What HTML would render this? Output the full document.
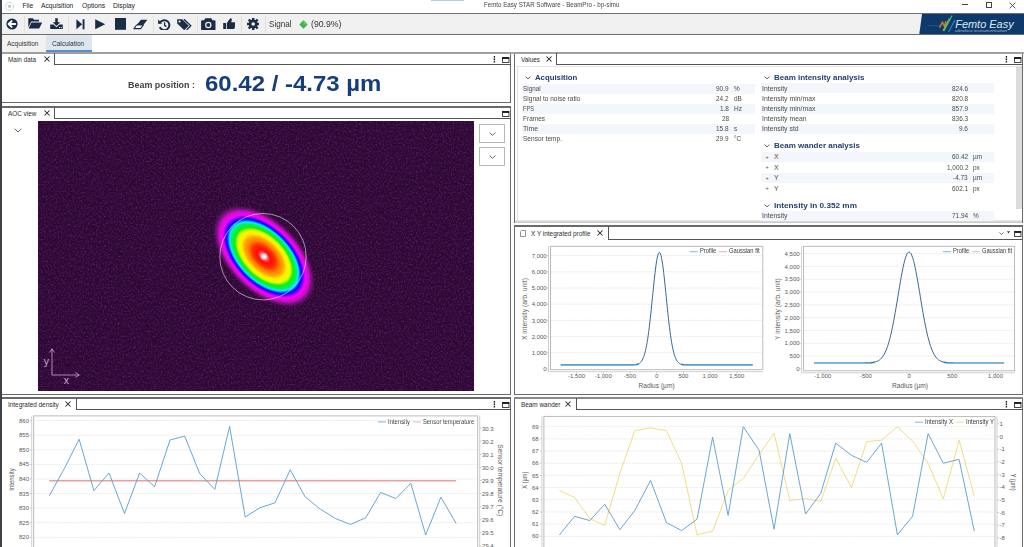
<!DOCTYPE html><html><head><meta charset="utf-8"><style>
*{margin:0;padding:0;box-sizing:border-box}
html,body{width:1024px;height:547px;overflow:hidden;background:#fff;font-family:"Liberation Sans", sans-serif;color:#333}
.a{position:absolute}
.t{position:absolute;white-space:nowrap;line-height:1}
</style></head><body>

<div class="a" style="left:0px;top:0px;width:1024px;height:13px;background:#fff"></div>
<div class="a" style="left:431px;top:0px;width:33px;height:1.2px;background:#b4cce4"></div>
<div class="a" style="left:0px;top:13px;width:1024px;height:1px;background:#6a7078"></div>
<svg class="a" style="left:4px;top:1px" width="11" height="11" viewBox="0 0 11 11"><circle cx="5.5" cy="5.5" r="4" fill="none" stroke="#999" stroke-width="0.9" stroke-dasharray="1 1.3"/><circle cx="5.5" cy="5.2" r="1.7" fill="#c8c8c8"/></svg>
<div class="t" style="left:22.5px;top:3.2px;font-size:6.7px;color:#222;font-weight:normal;">File</div>
<div class="t" style="left:41px;top:3.2px;font-size:6.7px;color:#222;font-weight:normal;">Acquisition</div>
<div class="t" style="left:82px;top:3.2px;font-size:6.7px;color:#222;font-weight:normal;">Options</div>
<div class="t" style="left:113px;top:3.2px;font-size:6.7px;color:#222;font-weight:normal;">Display</div>
<div class="t" style="left:484.00px;top:2.19px;font-size:6.9px;color:#444;font-weight:normal;transform:scaleX(0.8954);transform-origin:0 0;">Femto Easy STAR Software - BeamPro - bp-simu</div>
<div class="a" style="left:962px;top:4.4px;width:6px;height:1px;background:#444"></div>
<div class="a" style="left:986px;top:2.3px;width:6px;height:5.5px;border:1px solid #444"></div>
<svg class="a" style="left:1008.7px;top:2px" width="7" height="7" viewBox="0 0 7 7"><path d="M0.6 0.6L6.4 6.4M6.4 0.6L0.6 6.4" stroke="#444" stroke-width="0.9"/></svg>
<div class="a" style="left:0px;top:14px;width:1024px;height:20px;background:#f0f0f0"></div>
<div class="a" style="left:0px;top:34px;width:1024px;height:1px;background:#6e6e6e"></div>
<div class="a" style="left:23.5px;top:16px;width:1px;height:17px;background:#e0e0e0"></div>
<div class="a" style="left:67.5px;top:16px;width:1px;height:17px;background:#e0e0e0"></div>
<div class="a" style="left:152.5px;top:16px;width:1px;height:17px;background:#e0e0e0"></div>
<div class="a" style="left:197px;top:16px;width:1px;height:17px;background:#e0e0e0"></div>
<div class="a" style="left:240.5px;top:16px;width:1px;height:17px;background:#e0e0e0"></div>
<div class="a" style="left:264.5px;top:16px;width:1px;height:17px;background:#e0e0e0"></div>
<svg class="a" style="left:5.5px;top:17.8px" width="12" height="12" viewBox="0 0 12 12"><circle cx="6" cy="6" r="5.6" fill="#1b2c45"/><path d="M2.6 6L5.6 3.1M2.6 6L5.6 8.9M2.8 6H9.2" stroke="#fff" stroke-width="1.9" stroke-linecap="round" fill="none"/></svg>
<svg class="a" style="left:28px;top:18px" width="14.5" height="11" viewBox="0 0 14.5 11"><path d="M0.3 0.3H4.8L6 1.8H11V3.6H3.2L0.3 9.5Z" fill="#1b2c45"/><path d="M3.5 4.5H14.2L11.2 10.6H0.6Z" fill="#1b2c45"/></svg>
<svg class="a" style="left:49.5px;top:17.5px" width="13" height="11.5" viewBox="0 0 13 11.5"><path d="M5.2 0.2H7.8V4.2H10.3L6.5 8L2.7 4.2H5.2Z" fill="#1b2c45"/><path d="M0.2 6.6H3.6L6.5 9.3L9.4 6.6H12.8V11.3H0.2Z" fill="#1b2c45"/><circle cx="9.6" cy="9.6" r="0.6" fill="#fff"/><circle cx="11.2" cy="9.6" r="0.6" fill="#fff"/></svg>
<svg class="a" style="left:75.5px;top:19px" width="9" height="11" viewBox="0 0 9 11"><path d="M0.4 0.3L6.2 5.3L0.4 10.3Z" fill="#1b2c45"/><rect x="6.6" y="0.3" width="1.9" height="10" fill="#1b2c45"/></svg>
<svg class="a" style="left:94.5px;top:19px" width="11" height="11" viewBox="0 0 11 11"><path d="M0.2 0.3L10.2 5.3L0.2 10.3Z" fill="#1b2c45"/></svg>
<svg class="a" style="left:114.8px;top:18.1px" width="11.6" height="11.8" viewBox="0 0 11.6 11.8"><rect x="0" y="0" width="11.6" height="11.8" fill="#1b2c45"/></svg>
<svg class="a" style="left:133px;top:18.6px" width="15" height="11" viewBox="0 0 15 11"><path d="M8 0.7H14.3L10.35 6H3.64Z" fill="#1b2c45"/><path d="M3.64 6H10.35L7.6 9.6H0.9Z" fill="#fff" stroke="#1b2c45" stroke-width="1.1" stroke-linejoin="round"/></svg>
<svg class="a" style="left:158.2px;top:18.6px" width="12.4" height="11.5" viewBox="0 0 12.4 11.5"><path d="M2.3 3.2A5 5 0 1 1 1.8 8.2" stroke="#1b2c45" stroke-width="2" fill="none"/><path d="M0 0.6L0.2 5L4.4 4.4Z" fill="#1b2c45"/><path d="M6.6 3.3V6.3L8.4 7.6" stroke="#1b2c45" stroke-width="1.3" fill="none"/></svg>
<svg class="a" style="left:177.4px;top:18.6px" width="15" height="11.2" viewBox="0 0 15 11.2"><path d="M0.2 0.2H5.2L11.8 6.8L7.2 11.2L0.2 4.4Z" fill="#1b2c45"/><circle cx="2.6" cy="2.5" r="1.1" fill="#f0f0f0"/><path d="M7 0.2L13.8 6.8L9.6 11" stroke="#1b2c45" stroke-width="1.3" fill="none"/></svg>
<svg class="a" style="left:201.4px;top:17.5px" width="14.6" height="12.4" viewBox="0 0 14.6 12.4"><path d="M4.2 0.3H10.4L11.4 2.2H13.6Q14.5 2.2 14.5 3.2V11.2Q14.5 12.3 13.5 12.3H1.1Q0.1 12.3 0.1 11.2V3.2Q0.1 2.2 1.1 2.2H3.2Z" fill="#1b2c45"/><circle cx="7.3" cy="7" r="3.2" fill="#f0f0f0"/><circle cx="7.3" cy="7" r="2" fill="#1b2c45"/></svg>
<svg class="a" style="left:222.6px;top:18px" width="12.8" height="11.4" viewBox="0 0 12.8 11.4"><rect x="0.2" y="5" width="2.8" height="6.2" fill="#1b2c45"/><path d="M3.8 5L6.4 1.6Q7 0.2 8 0.3Q9.2 0.6 8.7 2.4L8.2 4.2H11.4Q12.6 4.3 12.5 5.6L11.6 10.2Q11.3 11.2 10.2 11.2H3.8Z" fill="#1b2c45"/></svg>
<svg class="a" style="left:247px;top:18px" width="12.4" height="12" viewBox="0 0 12.4 12"><rect x="5" y="-0.3" width="2.4" height="12.6" rx="0.4" fill="#1b2c45" transform="rotate(0 6.2 6)"/><rect x="5" y="-0.3" width="2.4" height="12.6" rx="0.4" fill="#1b2c45" transform="rotate(45 6.2 6)"/><rect x="5" y="-0.3" width="2.4" height="12.6" rx="0.4" fill="#1b2c45" transform="rotate(90 6.2 6)"/><rect x="5" y="-0.3" width="2.4" height="12.6" rx="0.4" fill="#1b2c45" transform="rotate(135 6.2 6)"/><circle cx="6.2" cy="6" r="4.4" fill="#1b2c45"/><circle cx="6.2" cy="6" r="1.8" fill="#f0f0f0"/></svg>
<div class="t" style="left:268.50px;top:19.52px;font-size:9.2px;color:#333;font-weight:normal;transform:scaleX(0.8798);transform-origin:0 0;">Signal</div>
<svg class="a" style="left:298.5px;top:20px" width="9" height="9" viewBox="0 0 9 9"><path d="M4.5 0.3L8.7 4.5L4.5 8.7L0.3 4.5Z" fill="#3fb24a"/><path d="M4.5 0.3L8.7 4.5L4.5 4.5Z" fill="#5fcd5f"/></svg>
<div class="t" style="left:311.00px;top:19.52px;font-size:9.2px;color:#333;font-weight:normal;transform:scaleX(0.9468);transform-origin:0 0;">(90.9%)</div>
<svg class="a" style="left:918px;top:14px" width="106" height="20" viewBox="0 0 106 20"><path d="M4 0H106V20H1.3Z" fill="#0d3a6b"/><path d="M10 11.8H21" stroke="#50607a" stroke-width="0.6"/><path d="M21.5 13.5L24.5 8.2L26.5 12.5L28 7" stroke="#d0802a" stroke-width="1.6" fill="none" opacity="0.9"/><path d="M25 17L31.5 4.5" stroke="#c8c830" stroke-width="1.3" opacity="0.85"/><path d="M26 17L34 1.5" stroke="#3cb878" stroke-width="1.4"/><path d="M30.5 18L37 6" stroke="#3a78d8" stroke-width="1.3"/><text x="37.2" y="14.4" font-family="Liberation Sans" font-style="italic" font-size="11.2" fill="#dfe9f4" textLength="58.5" lengthAdjust="spacingAndGlyphs">Femto Easy</text><text x="37" y="18.3" font-family="Liberation Sans" font-style="italic" font-size="3.4" fill="#9fb6d2" textLength="52" lengthAdjust="spacingAndGlyphs">ultrafast instrumentation</text></svg>
<div class="a" style="left:0px;top:35px;width:1024px;height:17px;background:#fff"></div>
<div class="a" style="left:2px;top:35px;width:45px;height:17px;background:#f2f2f2"></div>
<div class="a" style="left:46px;top:35px;width:46px;height:17px;background:#dde6ee"></div>
<div class="a" style="left:46px;top:50.3px;width:46px;height:1.6px;background:#5a8ec4"></div>
<div class="a" style="left:0px;top:52px;width:1024px;height:1.5px;background:#a8a8a8"></div>
<div class="t" style="left:7px;top:40.5px;font-size:6.5px;color:#333;font-weight:normal;">Acquisition</div>
<div class="t" style="left:52px;top:40.5px;font-size:6.5px;color:#333;font-weight:normal;">Calculation</div>
<div class="a" style="left:1px;top:52.5px;width:510px;height:50.5px;border:1px solid #6a6a6a;border-top:none;background:#fff"></div>
<div class="a" style="left:1px;top:52.0px;width:510px;height:1.5px;background:#a0a0a0"></div>
<div class="a" style="left:54px;top:52.5px;width:1px;height:11.5px;background:#555"></div>
<div class="a" style="left:54px;top:64.0px;width:457px;height:1px;background:#555"></div>
<div class="t" style="left:8px;top:56.65px;font-size:6.4px;color:#2c2c2c;font-weight:normal;">Main data</div>
<svg class="a" style="left:43.5px;top:56.4px" width="6" height="6" viewBox="0 0 6 6"><path d="M0.5 0.5L5.5 5.5M5.5 0.5L0.5 5.5" stroke="#222" stroke-width="1.05"/></svg>
<svg class="a" style="left:493.4px;top:56.0px" width="3" height="7" viewBox="0 0 3 7"><rect x="0.7" y="0" width="1.4" height="1.7" fill="#222"/><rect x="0.7" y="2.4" width="1.4" height="1.7" fill="#222"/><rect x="0.7" y="4.8" width="1.4" height="1.7" fill="#222"/></svg>
<svg class="a" style="left:501.5px;top:57.05px" width="8" height="6" viewBox="0 0 8 6"><rect x="0.5" y="0.5" width="6.5" height="5" fill="none" stroke="#333" stroke-width="0.9"/><rect x="0.5" y="0.3" width="6.5" height="1.6" fill="#111"/></svg>
<div class="a" style="left:1px;top:106.5px;width:510px;height:288px;border:1px solid #6a6a6a;border-top:none;background:#fff"></div>
<div class="a" style="left:1px;top:106.0px;width:510px;height:1.5px;background:#6a6a6a"></div>
<div class="a" style="left:54px;top:106.5px;width:1px;height:11.5px;background:#555"></div>
<div class="a" style="left:54px;top:118.0px;width:457px;height:1px;background:#555"></div>
<div class="t" style="left:8px;top:110.65px;font-size:6.4px;color:#2c2c2c;font-weight:normal;">AOC view</div>
<svg class="a" style="left:43.5px;top:110.4px" width="6" height="6" viewBox="0 0 6 6"><path d="M0.5 0.5L5.5 5.5M5.5 0.5L0.5 5.5" stroke="#222" stroke-width="1.05"/></svg>
<svg class="a" style="left:501.5px;top:111.05px" width="8" height="6" viewBox="0 0 8 6"><rect x="0.5" y="0.5" width="6.5" height="5" fill="none" stroke="#333" stroke-width="0.9"/><rect x="0.5" y="0.3" width="6.5" height="1.6" fill="#111"/></svg>
<div class="a" style="left:1px;top:397.5px;width:510px;height:150px;border:1px solid #6a6a6a;border-top:none;background:#fff"></div>
<div class="a" style="left:1px;top:397.0px;width:510px;height:1.5px;background:#6a6a6a"></div>
<div class="a" style="left:76px;top:397.5px;width:1px;height:11.5px;background:#555"></div>
<div class="a" style="left:76px;top:409.0px;width:435px;height:1px;background:#555"></div>
<div class="t" style="left:8px;top:401.65px;font-size:6.4px;color:#2c2c2c;font-weight:normal;">Integrated density</div>
<svg class="a" style="left:65px;top:401.4px" width="6" height="6" viewBox="0 0 6 6"><path d="M0.5 0.5L5.5 5.5M5.5 0.5L0.5 5.5" stroke="#222" stroke-width="1.05"/></svg>
<svg class="a" style="left:493.4px;top:401.0px" width="3" height="7" viewBox="0 0 3 7"><rect x="0.7" y="0" width="1.4" height="1.7" fill="#222"/><rect x="0.7" y="2.4" width="1.4" height="1.7" fill="#222"/><rect x="0.7" y="4.8" width="1.4" height="1.7" fill="#222"/></svg>
<svg class="a" style="left:501.5px;top:402.05px" width="8" height="6" viewBox="0 0 8 6"><rect x="0.5" y="0.5" width="6.5" height="5" fill="none" stroke="#333" stroke-width="0.9"/><rect x="0.5" y="0.3" width="6.5" height="1.6" fill="#111"/></svg>
<div class="a" style="left:514px;top:52.5px;width:509px;height:170px;border:1px solid #6a6a6a;border-top:none;background:#fff"></div>
<div class="a" style="left:514px;top:52.0px;width:509px;height:1.5px;background:#a0a0a0"></div>
<div class="a" style="left:556px;top:52.5px;width:1px;height:11.5px;background:#555"></div>
<div class="a" style="left:556px;top:64.0px;width:467px;height:1px;background:#555"></div>
<div class="t" style="left:521px;top:56.65px;font-size:6.4px;color:#2c2c2c;font-weight:normal;">Values</div>
<svg class="a" style="left:546px;top:56.4px" width="6" height="6" viewBox="0 0 6 6"><path d="M0.5 0.5L5.5 5.5M5.5 0.5L0.5 5.5" stroke="#222" stroke-width="1.05"/></svg>
<svg class="a" style="left:1005.4px;top:56.0px" width="3" height="7" viewBox="0 0 3 7"><rect x="0.7" y="0" width="1.4" height="1.7" fill="#222"/><rect x="0.7" y="2.4" width="1.4" height="1.7" fill="#222"/><rect x="0.7" y="4.8" width="1.4" height="1.7" fill="#222"/></svg>
<svg class="a" style="left:1013.5px;top:57.05px" width="8" height="6" viewBox="0 0 8 6"><rect x="0.5" y="0.5" width="6.5" height="5" fill="none" stroke="#333" stroke-width="0.9"/><rect x="0.5" y="0.3" width="6.5" height="1.6" fill="#111"/></svg>
<div class="a" style="left:514px;top:225.5px;width:509px;height:169px;border:1px solid #6a6a6a;border-top:none;background:#fff"></div>
<div class="a" style="left:514px;top:225.0px;width:509px;height:1.5px;background:#6a6a6a"></div>
<div class="a" style="left:608px;top:225.5px;width:1px;height:13.5px;background:#555"></div>
<div class="a" style="left:608px;top:239.0px;width:415px;height:1px;background:#555"></div>
<div class="t" style="left:531px;top:230.65px;font-size:6.4px;color:#2c2c2c;font-weight:normal;">X Y integrated profile</div>
<svg class="a" style="left:597px;top:230.4px" width="6" height="6" viewBox="0 0 6 6"><path d="M0.5 0.5L5.5 5.5M5.5 0.5L0.5 5.5" stroke="#222" stroke-width="1.05"/></svg>
<svg class="a" style="left:1013.5px;top:231.05px" width="8" height="6" viewBox="0 0 8 6"><rect x="0.5" y="0.5" width="6.5" height="5" fill="none" stroke="#333" stroke-width="0.9"/><rect x="0.5" y="0.3" width="6.5" height="1.6" fill="#111"/></svg>
<svg class="a" style="left:520px;top:230px" width="6" height="7" viewBox="0 0 6 7"><path d="M0.5 1.5L1.5 0.5H5.5V6.5H0.5Z" fill="none" stroke="#777" stroke-width="0.8"/></svg>
<svg class="a" style="left:998.5px;top:231.8px" width="5" height="3" viewBox="0 0 5 3"><path d="M0.4 0.4L2.5 2.5L4.6 0.4" stroke="#555" stroke-width="0.8" fill="none"/></svg>
<svg class="a" style="left:1007.2px;top:230.8px" width="3" height="3" viewBox="0 0 3 3"><path d="M0 0.2H3L1.5 2.4Z" fill="#333"/></svg>
<div class="a" style="left:514px;top:397.5px;width:509px;height:150px;border:1px solid #6a6a6a;border-top:none;background:#fff"></div>
<div class="a" style="left:514px;top:397.0px;width:509px;height:1.5px;background:#8a8a8a"></div>
<div class="a" style="left:576px;top:397.5px;width:1px;height:11.5px;background:#555"></div>
<div class="a" style="left:576px;top:409.0px;width:447px;height:1px;background:#555"></div>
<div class="t" style="left:521px;top:401.65px;font-size:6.4px;color:#2c2c2c;font-weight:normal;">Beam wander</div>
<svg class="a" style="left:565px;top:401.4px" width="6" height="6" viewBox="0 0 6 6"><path d="M0.5 0.5L5.5 5.5M5.5 0.5L0.5 5.5" stroke="#222" stroke-width="1.05"/></svg>
<svg class="a" style="left:1005.4px;top:401.0px" width="3" height="7" viewBox="0 0 3 7"><rect x="0.7" y="0" width="1.4" height="1.7" fill="#222"/><rect x="0.7" y="2.4" width="1.4" height="1.7" fill="#222"/><rect x="0.7" y="4.8" width="1.4" height="1.7" fill="#222"/></svg>
<svg class="a" style="left:1013.5px;top:402.05px" width="8" height="6" viewBox="0 0 8 6"><rect x="0.5" y="0.5" width="6.5" height="5" fill="none" stroke="#333" stroke-width="0.9"/><rect x="0.5" y="0.3" width="6.5" height="1.6" fill="#111"/></svg>
<div class="t" style="left:127.70px;top:79.85px;font-size:9.8px;color:#444;font-weight:bold;transform:scaleX(0.9115);transform-origin:0 0;">Beam position :</div>
<div class="t" style="left:204.80px;top:73.36px;font-size:21.6px;color:#163d7c;font-weight:bold;transform:scaleX(1.1104);transform-origin:0 0;">60.42 / -4.73 µm</div>
<svg class="a" style="left:14px;top:128px" width="8" height="5" viewBox="0 0 8 5"><path d="M0.7 0.7L4 4L7.3 0.7" stroke="#555" stroke-width="0.9" fill="none"/></svg>
<div class="a" style="left:479px;top:123.5px;width:26px;height:19px;border:1px solid #b8b8b8;background:#fff"></div>
<svg class="a" style="left:489px;top:131.5px" width="7" height="4" viewBox="0 0 7 4"><path d="M0.6 0.6L3.5 3.3L6.4 0.6" stroke="#555" stroke-width="0.9" fill="none"/></svg>
<div class="a" style="left:479px;top:146.5px;width:26px;height:19px;border:1px solid #b8b8b8;background:#fff"></div>
<svg class="a" style="left:489px;top:154.5px" width="7" height="4" viewBox="0 0 7 4"><path d="M0.6 0.6L3.5 3.3L6.4 0.6" stroke="#555" stroke-width="0.9" fill="none"/></svg>
<svg class="a" style="left:38px;top:121px" width="436" height="270" viewBox="0 0 436 270">
<defs>
<filter id="nz" x="0" y="0" width="100%" height="100%"><feTurbulence type="fractalNoise" baseFrequency="0.6" numOctaves="3" seed="11" result="n"/>
<feColorMatrix in="n" type="matrix" values="0 0 0 0 0.30  0 0 0 0 0.05  0 0 0 0 0.34  0 0 0 -1.8 1.0"/></filter>
<radialGradient id="bm" cx="0.5" cy="0.5" r="0.5"><stop offset="0" stop-color="#ffd0d0" stop-opacity="1"/><stop offset="0.05" stop-color="#ff8080" stop-opacity="1"/><stop offset="0.10" stop-color="#ff3030" stop-opacity="1"/><stop offset="0.13" stop-color="#ff0a0a" stop-opacity="1"/><stop offset="0.22" stop-color="#ff3000" stop-opacity="1"/><stop offset="0.3" stop-color="#ff8000" stop-opacity="1"/><stop offset="0.37" stop-color="#ffa800" stop-opacity="1"/><stop offset="0.43" stop-color="#ffee00" stop-opacity="1"/><stop offset="0.5" stop-color="#e8ff00" stop-opacity="1"/><stop offset="0.555" stop-color="#10f010" stop-opacity="1"/><stop offset="0.62" stop-color="#00f060" stop-opacity="1"/><stop offset="0.655" stop-color="#00f0ff" stop-opacity="1"/><stop offset="0.685" stop-color="#0070ff" stop-opacity="1"/><stop offset="0.71" stop-color="#0808ff" stop-opacity="1"/><stop offset="0.745" stop-color="#6000ff" stop-opacity="1"/><stop offset="0.79" stop-color="#ff00ff" stop-opacity="1"/><stop offset="0.86" stop-color="#e010e0" stop-opacity="0.85"/><stop offset="0.93" stop-color="#901890" stop-opacity="0.45"/><stop offset="1.0" stop-color="#340a3e" stop-opacity="0"/></radialGradient>
</defs>
<rect width="436" height="270" fill="#2d0835"/>
<rect width="436" height="270" filter="url(#nz)" opacity="0.5"/>
<ellipse cx="226" cy="135.4" rx="64" ry="37" fill="url(#bm)" transform="rotate(45 226 135.4)"/>
<circle cx="226" cy="135.5" r="2.2" fill="#fff" opacity="0.95"/><circle cx="226" cy="135.5" r="3.6" fill="#fff" opacity="0.35"/><circle cx="225" cy="135.7" r="43.2" fill="none" stroke="#f4e8f4" stroke-opacity="0.75" stroke-width="0.8"/>
<path d="M14 254V228M11.5 231.5L14 227.8L16.5 231.5M14 254H41M37.5 251.5L41.2 254L37.5 256.5" stroke="#c9a6d6" stroke-width="0.8" fill="none"/>
<text x="5.8" y="244.2" font-family="Liberation Sans" font-size="10.5" fill="#c9a6d6">y</text>
<text x="25.8" y="262.9" font-family="Liberation Sans" font-size="10.5" fill="#c9a6d6">x</text>
</svg>
<div class="a" style="left:516px;top:66px;width:500px;height:1px;background:#e6e6e6"></div>
<div class="a" style="left:516.5px;top:66px;width:1px;height:156px;background:#e2e2e2"></div>
<div class="a" style="left:1016px;top:66px;width:6px;height:143px;background:#dcdcdc"></div>
<div class="a" style="left:515px;top:219.6px;width:507px;height:3px;background:linear-gradient(#ececec,#c4c4c4)"></div>
<svg class="a" style="left:524.7px;top:76.1px" width="6" height="4" viewBox="0 0 6 4"><path d="M0.6 0.6L3 3L5.4 0.6" stroke="#555" stroke-width="0.9" fill="none"/></svg>
<div class="t" style="left:535.00px;top:74.31px;font-size:7.6px;color:#213f6c;font-weight:bold;transform:scaleX(1.0247);transform-origin:0 0;">Acquisition</div>
<div class="a" style="left:521.5px;top:83.8px;width:233.5px;height:10px;background:#f3f6fa"></div>
<div class="t" style="left:523.00px;top:85.38px;font-size:7px;color:#4a4a4a;font-weight:normal;transform:scaleX(0.9045);transform-origin:0 0;">Signal</div>
<div class="t" style="left:716.47px;top:85.38px;font-size:7px;color:#4a4a4a;font-weight:normal;transform:scaleX(0.9200);transform-origin:0 0;">90.9</div>
<div class="t" style="left:734.00px;top:85.38px;font-size:7px;color:#4a4a4a;font-weight:normal;transform:scaleX(0.9200);transform-origin:0 0;">%</div>
<div class="t" style="left:523.00px;top:95.33px;font-size:7px;color:#4a4a4a;font-weight:normal;transform:scaleX(0.9320);transform-origin:0 0;">Signal to noise ratio</div>
<div class="t" style="left:716.47px;top:95.33px;font-size:7px;color:#4a4a4a;font-weight:normal;transform:scaleX(0.9200);transform-origin:0 0;">24.2</div>
<div class="t" style="left:734.00px;top:95.33px;font-size:7px;color:#4a4a4a;font-weight:normal;transform:scaleX(0.9200);transform-origin:0 0;">dB</div>
<div class="a" style="left:521.5px;top:103.69999999999999px;width:233.5px;height:10px;background:#f3f6fa"></div>
<div class="t" style="left:523.00px;top:105.28px;font-size:7px;color:#4a4a4a;font-weight:normal;transform:scaleX(0.8080);transform-origin:0 0;">FPS</div>
<div class="t" style="left:720.05px;top:105.28px;font-size:7px;color:#4a4a4a;font-weight:normal;transform:scaleX(0.9200);transform-origin:0 0;">1.8</div>
<div class="t" style="left:734.00px;top:105.28px;font-size:7px;color:#4a4a4a;font-weight:normal;transform:scaleX(0.9200);transform-origin:0 0;">Hz</div>
<div class="t" style="left:523.00px;top:115.23px;font-size:7px;color:#4a4a4a;font-weight:normal;transform:scaleX(0.9273);transform-origin:0 0;">Frames</div>
<div class="t" style="left:721.84px;top:115.23px;font-size:7px;color:#4a4a4a;font-weight:normal;transform:scaleX(0.9200);transform-origin:0 0;">28</div>
<div class="a" style="left:521.5px;top:123.6px;width:233.5px;height:10px;background:#f3f6fa"></div>
<div class="t" style="left:523.00px;top:125.18px;font-size:7px;color:#4a4a4a;font-weight:normal;transform:scaleX(0.9806);transform-origin:0 0;">Time</div>
<div class="t" style="left:716.47px;top:125.18px;font-size:7px;color:#4a4a4a;font-weight:normal;transform:scaleX(0.9200);transform-origin:0 0;">15.8</div>
<div class="t" style="left:734.00px;top:125.18px;font-size:7px;color:#4a4a4a;font-weight:normal;transform:scaleX(0.9200);transform-origin:0 0;">s</div>
<div class="t" style="left:523.00px;top:135.13px;font-size:7px;color:#4a4a4a;font-weight:normal;transform:scaleX(0.9368);transform-origin:0 0;">Sensor temp.</div>
<div class="t" style="left:716.47px;top:135.13px;font-size:7px;color:#4a4a4a;font-weight:normal;transform:scaleX(0.9200);transform-origin:0 0;">29.9</div>
<div class="t" style="left:734.00px;top:135.13px;font-size:7px;color:#4a4a4a;font-weight:normal;transform:scaleX(0.9200);transform-origin:0 0;">°C</div>
<svg class="a" style="left:763.7px;top:76.1px" width="6" height="4" viewBox="0 0 6 4"><path d="M0.6 0.6L3 3L5.4 0.6" stroke="#555" stroke-width="0.9" fill="none"/></svg>
<div class="t" style="left:774.00px;top:74.31px;font-size:7.6px;color:#213f6c;font-weight:bold;transform:scaleX(1.0502);transform-origin:0 0;">Beam intensity analysis</div>
<div class="a" style="left:760.5px;top:83.3px;width:233.0px;height:10px;background:#f3f6fa"></div>
<div class="t" style="left:762.00px;top:84.88px;font-size:7px;color:#4a4a4a;font-weight:normal;transform:scaleX(0.9800);transform-origin:0 0;">Intensity</div>
<div class="t" style="left:951.88px;top:84.88px;font-size:7px;color:#4a4a4a;font-weight:normal;transform:scaleX(0.9200);transform-origin:0 0;">824.6</div>
<div class="t" style="left:762.00px;top:94.98px;font-size:7px;color:#4a4a4a;font-weight:normal;transform:scaleX(0.9800);transform-origin:0 0;">Intensity min/max</div>
<div class="t" style="left:951.88px;top:94.98px;font-size:7px;color:#4a4a4a;font-weight:normal;transform:scaleX(0.9200);transform-origin:0 0;">820.8</div>
<div class="a" style="left:760.5px;top:103.5px;width:233.0px;height:10px;background:#f3f6fa"></div>
<div class="t" style="left:762.00px;top:105.08px;font-size:7px;color:#4a4a4a;font-weight:normal;transform:scaleX(0.9800);transform-origin:0 0;">Intensity min/max</div>
<div class="t" style="left:951.88px;top:105.08px;font-size:7px;color:#4a4a4a;font-weight:normal;transform:scaleX(0.9200);transform-origin:0 0;">857.9</div>
<div class="t" style="left:762.00px;top:115.18px;font-size:7px;color:#4a4a4a;font-weight:normal;transform:scaleX(0.9800);transform-origin:0 0;">Intensity mean</div>
<div class="t" style="left:951.88px;top:115.18px;font-size:7px;color:#4a4a4a;font-weight:normal;transform:scaleX(0.9200);transform-origin:0 0;">836.3</div>
<div class="a" style="left:760.5px;top:123.69999999999999px;width:233.0px;height:10px;background:#f3f6fa"></div>
<div class="t" style="left:762.00px;top:125.28px;font-size:7px;color:#4a4a4a;font-weight:normal;transform:scaleX(0.9800);transform-origin:0 0;">Intensity std</div>
<div class="t" style="left:959.05px;top:125.28px;font-size:7px;color:#4a4a4a;font-weight:normal;transform:scaleX(0.9200);transform-origin:0 0;">9.6</div>
<svg class="a" style="left:763.7px;top:143.60000000000002px" width="6" height="4" viewBox="0 0 6 4"><path d="M0.6 0.6L3 3L5.4 0.6" stroke="#555" stroke-width="0.9" fill="none"/></svg>
<div class="t" style="left:774.00px;top:141.81px;font-size:7.6px;color:#213f6c;font-weight:bold;transform:scaleX(1.0549);transform-origin:0 0;">Beam wander analysis</div>
<div class="a" style="left:760.5px;top:151.6px;width:233.0px;height:10px;background:#f3f6fa"></div>
<div class="t" style="left:765.50px;top:154.75px;font-size:5.5px;color:#555;font-weight:normal;">+</div>
<div class="t" style="left:774.00px;top:153.18px;font-size:7px;color:#4a4a4a;font-weight:normal;">X</div>
<div class="t" style="left:951.88px;top:153.18px;font-size:7px;color:#4a4a4a;font-weight:normal;transform:scaleX(0.9200);transform-origin:0 0;">60.42</div>
<div class="t" style="left:973.00px;top:153.18px;font-size:7px;color:#4a4a4a;font-weight:normal;transform:scaleX(0.9200);transform-origin:0 0;">µm</div>
<div class="t" style="left:765.50px;top:165.25px;font-size:5.5px;color:#555;font-weight:normal;">+</div>
<div class="t" style="left:774.00px;top:163.68px;font-size:7px;color:#4a4a4a;font-weight:normal;">X</div>
<div class="t" style="left:946.51px;top:163.68px;font-size:7px;color:#4a4a4a;font-weight:normal;transform:scaleX(0.9200);transform-origin:0 0;">1,000.2</div>
<div class="t" style="left:973.00px;top:163.68px;font-size:7px;color:#4a4a4a;font-weight:normal;transform:scaleX(0.9200);transform-origin:0 0;">px</div>
<div class="a" style="left:760.5px;top:172.6px;width:233.0px;height:10px;background:#f3f6fa"></div>
<div class="t" style="left:765.50px;top:175.75px;font-size:5.5px;color:#555;font-weight:normal;">+</div>
<div class="t" style="left:774.00px;top:174.18px;font-size:7px;color:#4a4a4a;font-weight:normal;">Y</div>
<div class="t" style="left:953.32px;top:174.18px;font-size:7px;color:#4a4a4a;font-weight:normal;transform:scaleX(0.9200);transform-origin:0 0;">-4.73</div>
<div class="t" style="left:973.00px;top:174.18px;font-size:7px;color:#4a4a4a;font-weight:normal;transform:scaleX(0.9200);transform-origin:0 0;">µm</div>
<div class="t" style="left:765.50px;top:186.25px;font-size:5.5px;color:#555;font-weight:normal;">+</div>
<div class="t" style="left:774.00px;top:184.68px;font-size:7px;color:#4a4a4a;font-weight:normal;">Y</div>
<div class="t" style="left:951.88px;top:184.68px;font-size:7px;color:#4a4a4a;font-weight:normal;transform:scaleX(0.9200);transform-origin:0 0;">602.1</div>
<div class="t" style="left:973.00px;top:184.68px;font-size:7px;color:#4a4a4a;font-weight:normal;transform:scaleX(0.9200);transform-origin:0 0;">px</div>
<svg class="a" style="left:763.7px;top:203.60000000000002px" width="6" height="4" viewBox="0 0 6 4"><path d="M0.6 0.6L3 3L5.4 0.6" stroke="#555" stroke-width="0.9" fill="none"/></svg>
<div class="t" style="left:774.00px;top:201.81px;font-size:7.6px;color:#213f6c;font-weight:bold;transform:scaleX(1.0797);transform-origin:0 0;">Intensity in 0.352 mm</div>
<div class="a" style="left:760.5px;top:210.6px;width:233.0px;height:10px;background:#f3f6fa"></div>
<div class="t" style="left:762.00px;top:212.18px;font-size:7px;color:#4a4a4a;font-weight:normal;transform:scaleX(0.9800);transform-origin:0 0;">Intensity</div>
<div class="t" style="left:951.88px;top:212.18px;font-size:7px;color:#4a4a4a;font-weight:normal;transform:scaleX(0.9200);transform-origin:0 0;">71.94</div>
<div class="t" style="left:973.00px;top:212.18px;font-size:7px;color:#4a4a4a;font-weight:normal;transform:scaleX(0.9200);transform-origin:0 0;">%</div>
<div class="t" style="left:728.80px;top:248.42px;font-size:6.6px;color:#3a3a3a;font-weight:normal;transform:scaleX(0.8810);transform-origin:0 0;">Gaussian fit</div>
<div class="t" style="left:699.60px;top:248.42px;font-size:6.6px;color:#3a3a3a;font-weight:normal;transform:scaleX(0.8660);transform-origin:0 0;">Profile</div>
<svg class="a" style="left:515px;top:240px" width="255" height="150" viewBox="515 240 255 150"><path d="M550.5 352.80H762.8" stroke="#e2e2e2" stroke-width="0.8" stroke-dasharray="1.5 1"/><path d="M550.5 336.60H762.8" stroke="#e2e2e2" stroke-width="0.8" stroke-dasharray="1.5 1"/><path d="M550.5 320.40H762.8" stroke="#e2e2e2" stroke-width="0.8" stroke-dasharray="1.5 1"/><path d="M550.5 304.20H762.8" stroke="#e2e2e2" stroke-width="0.8" stroke-dasharray="1.5 1"/><path d="M550.5 288.00H762.8" stroke="#e2e2e2" stroke-width="0.8" stroke-dasharray="1.5 1"/><path d="M550.5 271.80H762.8" stroke="#e2e2e2" stroke-width="0.8" stroke-dasharray="1.5 1"/><path d="M550.5 255.60H762.8" stroke="#e2e2e2" stroke-width="0.8" stroke-dasharray="1.5 1"/><rect x="550.5" y="246.3" width="212.29999999999995" height="123.39999999999998" fill="none" stroke="#b4b4b4" stroke-width="0.9"/><path d="M548.5 246.3V371.7" stroke="#c4c4c4" stroke-width="0.8"/><path d="M546.5 369.00H548.5" stroke="#c4c4c4" stroke-width="0.8"/><path d="M546.5 352.80H548.5" stroke="#c4c4c4" stroke-width="0.8"/><path d="M546.5 336.60H548.5" stroke="#c4c4c4" stroke-width="0.8"/><path d="M546.5 320.40H548.5" stroke="#c4c4c4" stroke-width="0.8"/><path d="M546.5 304.20H548.5" stroke="#c4c4c4" stroke-width="0.8"/><path d="M546.5 288.00H548.5" stroke="#c4c4c4" stroke-width="0.8"/><path d="M546.5 271.80H548.5" stroke="#c4c4c4" stroke-width="0.8"/><path d="M546.5 255.60H548.5" stroke="#c4c4c4" stroke-width="0.8"/><path d="M548.5 371.7H762.8" stroke="#c4c4c4" stroke-width="0.8"/><path d="M576.60 371.7V373.7" stroke="#c4c4c4" stroke-width="0.8"/><path d="M603.30 371.7V373.7" stroke="#c4c4c4" stroke-width="0.8"/><path d="M630.00 371.7V373.7" stroke="#c4c4c4" stroke-width="0.8"/><path d="M656.70 371.7V373.7" stroke="#c4c4c4" stroke-width="0.8"/><path d="M683.40 371.7V373.7" stroke="#c4c4c4" stroke-width="0.8"/><path d="M710.10 371.7V373.7" stroke="#c4c4c4" stroke-width="0.8"/><path d="M736.80 371.7V373.7" stroke="#c4c4c4" stroke-width="0.8"/><path d="M560.58 364.95 L561.11 364.95 L561.65 364.95 L562.18 364.95 L562.72 364.95 L563.25 364.95 L563.78 364.95 L564.32 364.95 L564.85 364.95 L565.39 364.95 L565.92 364.95 L566.45 364.95 L566.99 364.95 L567.52 364.95 L568.06 364.95 L568.59 364.95 L569.12 364.95 L569.66 364.95 L570.19 364.95 L570.73 364.95 L571.26 364.95 L571.79 364.95 L572.33 364.95 L572.86 364.95 L573.40 364.95 L573.93 364.95 L574.46 364.95 L575.00 364.95 L575.53 364.95 L576.07 364.95 L576.60 364.95 L577.13 364.95 L577.67 364.95 L578.20 364.95 L578.74 364.95 L579.27 364.95 L579.80 364.95 L580.34 364.95 L580.87 364.95 L581.41 364.95 L581.94 364.95 L582.47 364.95 L583.01 364.95 L583.54 364.95 L584.08 364.95 L584.61 364.95 L585.14 364.95 L585.68 364.95 L586.21 364.95 L586.75 364.95 L587.28 364.95 L587.81 364.95 L588.35 364.95 L588.88 364.95 L589.42 364.95 L589.95 364.95 L590.48 364.95 L591.02 364.95 L591.55 364.95 L592.09 364.95 L592.62 364.95 L593.15 364.95 L593.69 364.95 L594.22 364.95 L594.76 364.95 L595.29 364.95 L595.82 364.95 L596.36 364.95 L596.89 364.95 L597.43 364.95 L597.96 364.95 L598.49 364.95 L599.03 364.95 L599.56 364.95 L600.10 364.95 L600.63 364.95 L601.16 364.95 L601.70 364.95 L602.23 364.95 L602.77 364.95 L603.30 364.95 L603.83 364.95 L604.37 364.95 L604.90 364.95 L605.44 364.95 L605.97 364.95 L606.50 364.95 L607.04 364.95 L607.57 364.95 L608.11 364.95 L608.64 364.95 L609.17 364.95 L609.71 364.95 L610.24 364.95 L610.78 364.95 L611.31 364.95 L611.84 364.95 L612.38 364.95 L612.91 364.95 L613.45 364.95 L613.98 364.95 L614.51 364.95 L615.05 364.95 L615.58 364.95 L616.12 364.95 L616.65 364.95 L617.18 364.95 L617.72 364.95 L618.25 364.95 L618.79 364.95 L619.32 364.95 L619.85 364.95 L620.39 364.95 L620.92 364.95 L621.46 364.95 L621.99 364.95 L622.52 364.95 L623.06 364.95 L623.59 364.95 L624.13 364.95 L624.66 364.95 L625.19 364.95 L625.73 364.95 L626.26 364.95 L626.80 364.95 L627.33 364.95 L627.86 364.95 L628.40 364.95 L628.93 364.94 L629.47 364.94 L630.00 364.94 L630.53 364.93 L631.07 364.93 L631.60 364.92 L632.14 364.91 L632.67 364.90 L633.20 364.88 L633.74 364.85 L634.27 364.82 L634.81 364.77 L635.34 364.72 L635.87 364.64 L636.41 364.55 L636.94 364.43 L637.48 364.28 L638.01 364.10 L638.54 363.86" stroke="#5b9dc8" stroke-width="1.7" fill="none" stroke-linejoin="round" /><path d="M681.26 364.28 L681.80 364.43 L682.33 364.55 L682.87 364.64 L683.40 364.72 L683.93 364.77 L684.47 364.82 L685.00 364.85 L685.54 364.88 L686.07 364.90 L686.60 364.91 L687.14 364.92 L687.67 364.93 L688.21 364.93 L688.74 364.94 L689.27 364.94 L689.81 364.94 L690.34 364.95 L690.88 364.95 L691.41 364.95 L691.94 364.95 L692.48 364.95 L693.01 364.95 L693.55 364.95 L694.08 364.95 L694.61 364.95 L695.15 364.95 L695.68 364.95 L696.22 364.95 L696.75 364.95 L697.28 364.95 L697.82 364.95 L698.35 364.95 L698.89 364.95 L699.42 364.95 L699.95 364.95 L700.49 364.95 L701.02 364.95 L701.56 364.95 L702.09 364.95 L702.62 364.95 L703.16 364.95 L703.69 364.95 L704.23 364.95 L704.76 364.95 L705.29 364.95 L705.83 364.95 L706.36 364.95 L706.90 364.95 L707.43 364.95 L707.96 364.95 L708.50 364.95 L709.03 364.95 L709.57 364.95 L710.10 364.95 L710.63 364.95 L711.17 364.95 L711.70 364.95 L712.24 364.95 L712.77 364.95 L713.30 364.95 L713.84 364.95 L714.37 364.95 L714.91 364.95 L715.44 364.95 L715.97 364.95 L716.51 364.95 L717.04 364.95 L717.58 364.95 L718.11 364.95 L718.64 364.95 L719.18 364.95 L719.71 364.95 L720.25 364.95 L720.78 364.95 L721.31 364.95 L721.85 364.95 L722.38 364.95 L722.92 364.95 L723.45 364.95 L723.98 364.95 L724.52 364.95 L725.05 364.95 L725.59 364.95 L726.12 364.95 L726.65 364.95 L727.19 364.95 L727.72 364.95 L728.26 364.95 L728.79 364.95 L729.32 364.95 L729.86 364.95 L730.39 364.95 L730.93 364.95 L731.46 364.95 L731.99 364.95 L732.53 364.95 L733.06 364.95 L733.60 364.95 L734.13 364.95 L734.66 364.95 L735.20 364.95 L735.73 364.95 L736.27 364.95 L736.80 364.95 L737.33 364.95 L737.87 364.95 L738.40 364.95 L738.94 364.95 L739.47 364.95 L740.00 364.95 L740.54 364.95 L741.07 364.95 L741.61 364.95 L742.14 364.95 L742.67 364.95 L743.21 364.95 L743.74 364.95 L744.28 364.95 L744.81 364.95 L745.34 364.95 L745.88 364.95 L746.41 364.95 L746.95 364.95 L747.48 364.95 L748.01 364.95 L748.55 364.95 L749.08 364.95 L749.62 364.95 L750.15 364.95 L750.68 364.95 L751.22 364.95 L751.75 364.95 L752.29 364.95 L752.82 364.95" stroke="#5b9dc8" stroke-width="1.7" fill="none" stroke-linejoin="round" /><path d="M636.41 364.55 L636.94 364.43 L637.48 364.28 L638.01 364.10 L638.54 363.86 L639.08 363.58 L639.61 363.22 L640.15 362.79 L640.68 362.27 L641.21 361.64 L641.75 360.89 L642.28 360.00 L642.82 358.95 L643.35 357.73 L643.88 356.30 L644.42 354.66 L644.95 352.78 L645.49 350.64 L646.02 348.23 L646.55 345.54 L647.09 342.54 L647.62 339.24 L648.16 335.64 L648.69 331.73 L649.22 327.54 L649.76 323.06 L650.29 318.34 L650.83 313.40 L651.36 308.29 L651.89 303.04 L652.43 297.73 L652.96 292.40 L653.50 287.12 L654.03 281.97 L654.56 277.02 L655.10 272.34 L655.63 268.00 L656.17 264.07 L656.70 260.63 L657.23 257.73 L657.77 255.41 L658.30 253.73 L658.84 252.70 L659.37 252.36 L659.90 252.70 L660.44 253.73 L660.97 255.41 L661.51 257.73 L662.04 260.63 L662.57 264.07 L663.11 268.00 L663.64 272.34 L664.18 277.02 L664.71 281.97 L665.24 287.12 L665.78 292.40 L666.31 297.73 L666.85 303.04 L667.38 308.29 L667.91 313.40 L668.45 318.34 L668.98 323.06 L669.52 327.54 L670.05 331.73 L670.58 335.64 L671.12 339.24 L671.65 342.54 L672.19 345.54 L672.72 348.23 L673.25 350.64 L673.79 352.78 L674.32 354.66 L674.86 356.30 L675.39 357.73 L675.92 358.95 L676.46 360.00 L676.99 360.89 L677.53 361.64 L678.06 362.27 L678.59 362.79 L679.13 363.22 L679.66 363.58 L680.20 363.86 L680.73 364.10 L681.26 364.28 L681.80 364.43 L682.33 364.55 L682.87 364.64 L683.40 364.72" stroke="#3a6890" stroke-width="1.0" fill="none" stroke-linejoin="round" /><path d="M718.8 251.60H726.8" stroke="#d8a080" stroke-width="1.3" opacity="0.6"/><path d="M689.5999999999999 251.60H697.5999999999999" stroke="#5b9dc8" stroke-width="1.3" opacity="0.6"/></svg>
<div class="t" style="left:543.36px;top:366.11px;font-size:6.0px;color:#5a5a5a;font-weight:normal;">0</div>
<div class="t" style="left:531.69px;top:349.91px;font-size:6.0px;color:#5a5a5a;font-weight:normal;">1,000</div>
<div class="t" style="left:531.69px;top:333.71px;font-size:6.0px;color:#5a5a5a;font-weight:normal;">2,000</div>
<div class="t" style="left:531.69px;top:317.51px;font-size:6.0px;color:#5a5a5a;font-weight:normal;">3,000</div>
<div class="t" style="left:531.69px;top:301.31px;font-size:6.0px;color:#5a5a5a;font-weight:normal;">4,000</div>
<div class="t" style="left:531.69px;top:285.11px;font-size:6.0px;color:#5a5a5a;font-weight:normal;">5,000</div>
<div class="t" style="left:531.69px;top:268.91px;font-size:6.0px;color:#5a5a5a;font-weight:normal;">6,000</div>
<div class="t" style="left:531.69px;top:252.71px;font-size:6.0px;color:#5a5a5a;font-weight:normal;">7,000</div>
<div class="t" style="left:568.09px;top:373.10px;font-size:6.0px;color:#5a5a5a;font-weight:normal;">-1,500</div>
<div class="t" style="left:594.79px;top:373.10px;font-size:6.0px;color:#5a5a5a;font-weight:normal;">-1,000</div>
<div class="t" style="left:624.00px;top:373.10px;font-size:6.0px;color:#5a5a5a;font-weight:normal;">-500</div>
<div class="t" style="left:655.03px;top:373.10px;font-size:6.0px;color:#5a5a5a;font-weight:normal;">0</div>
<div class="t" style="left:678.39px;top:373.10px;font-size:6.0px;color:#5a5a5a;font-weight:normal;">500</div>
<div class="t" style="left:702.59px;top:373.10px;font-size:6.0px;color:#5a5a5a;font-weight:normal;">1,000</div>
<div class="t" style="left:729.29px;top:373.10px;font-size:6.0px;color:#5a5a5a;font-weight:normal;">1,500</div>
<div class="t" style="left:638.56px;top:382.82px;font-size:6.6px;color:#5a5a5a;font-weight:normal;">Radius (µm)</div>
<div class="t" style="left:494.20px;top:304.70px;font-size:6.6px;color:#5a5a5a;transform:rotate(-90deg) scaleX(1.024);transform-origin:31.00px 3.30px">X intensity (arb. unit)</div>
<div class="t" style="left:982.10px;top:248.42px;font-size:6.6px;color:#3a3a3a;font-weight:normal;transform:scaleX(0.8666);transform-origin:0 0;">Gaussian fit</div>
<div class="t" style="left:952.90px;top:248.42px;font-size:6.6px;color:#3a3a3a;font-weight:normal;transform:scaleX(0.8660);transform-origin:0 0;">Profile</div>
<svg class="a" style="left:770px;top:240px" width="254" height="150" viewBox="770 240 254 150"><path d="M803.6 356.09H1014.6" stroke="#e2e2e2" stroke-width="0.8" stroke-dasharray="1.5 1"/><path d="M803.6 343.28H1014.6" stroke="#e2e2e2" stroke-width="0.8" stroke-dasharray="1.5 1"/><path d="M803.6 330.47H1014.6" stroke="#e2e2e2" stroke-width="0.8" stroke-dasharray="1.5 1"/><path d="M803.6 317.66H1014.6" stroke="#e2e2e2" stroke-width="0.8" stroke-dasharray="1.5 1"/><path d="M803.6 304.85H1014.6" stroke="#e2e2e2" stroke-width="0.8" stroke-dasharray="1.5 1"/><path d="M803.6 292.04H1014.6" stroke="#e2e2e2" stroke-width="0.8" stroke-dasharray="1.5 1"/><path d="M803.6 279.23H1014.6" stroke="#e2e2e2" stroke-width="0.8" stroke-dasharray="1.5 1"/><path d="M803.6 266.42H1014.6" stroke="#e2e2e2" stroke-width="0.8" stroke-dasharray="1.5 1"/><path d="M803.6 253.61H1014.6" stroke="#e2e2e2" stroke-width="0.8" stroke-dasharray="1.5 1"/><rect x="803.6" y="246.3" width="211.0" height="124.5" fill="none" stroke="#b4b4b4" stroke-width="0.9"/><path d="M801.6 246.3V372.8" stroke="#c4c4c4" stroke-width="0.8"/><path d="M799.6 368.90H801.6" stroke="#c4c4c4" stroke-width="0.8"/><path d="M799.6 356.09H801.6" stroke="#c4c4c4" stroke-width="0.8"/><path d="M799.6 343.28H801.6" stroke="#c4c4c4" stroke-width="0.8"/><path d="M799.6 330.47H801.6" stroke="#c4c4c4" stroke-width="0.8"/><path d="M799.6 317.66H801.6" stroke="#c4c4c4" stroke-width="0.8"/><path d="M799.6 304.85H801.6" stroke="#c4c4c4" stroke-width="0.8"/><path d="M799.6 292.04H801.6" stroke="#c4c4c4" stroke-width="0.8"/><path d="M799.6 279.23H801.6" stroke="#c4c4c4" stroke-width="0.8"/><path d="M799.6 266.42H801.6" stroke="#c4c4c4" stroke-width="0.8"/><path d="M799.6 253.61H801.6" stroke="#c4c4c4" stroke-width="0.8"/><path d="M801.6 372.8H1014.6" stroke="#c4c4c4" stroke-width="0.8"/><path d="M822.70 372.8V374.8" stroke="#c4c4c4" stroke-width="0.8"/><path d="M865.90 372.8V374.8" stroke="#c4c4c4" stroke-width="0.8"/><path d="M909.10 372.8V374.8" stroke="#c4c4c4" stroke-width="0.8"/><path d="M952.30 372.8V374.8" stroke="#c4c4c4" stroke-width="0.8"/><path d="M995.50 372.8V374.8" stroke="#c4c4c4" stroke-width="0.8"/><path d="M814.06 363.01 L814.92 363.01 L815.79 363.01 L816.65 363.01 L817.52 363.01 L818.38 363.01 L819.24 363.01 L820.11 363.01 L820.97 363.01 L821.84 363.01 L822.70 363.01 L823.56 363.01 L824.43 363.01 L825.29 363.01 L826.16 363.01 L827.02 363.01 L827.88 363.01 L828.75 363.01 L829.61 363.01 L830.48 363.01 L831.34 363.01 L832.20 363.01 L833.07 363.01 L833.93 363.01 L834.80 363.01 L835.66 363.01 L836.52 363.01 L837.39 363.01 L838.25 363.01 L839.12 363.01 L839.98 363.01 L840.84 363.01 L841.71 363.01 L842.57 363.01 L843.44 363.01 L844.30 363.01 L845.16 363.01 L846.03 363.01 L846.89 363.01 L847.76 363.01 L848.62 363.01 L849.48 363.01 L850.35 363.01 L851.21 363.01 L852.08 363.01 L852.94 363.01 L853.80 363.01 L854.67 363.01 L855.53 363.01 L856.40 363.01 L857.26 363.01 L858.12 363.00 L858.99 363.00 L859.85 363.00 L860.72 363.00 L861.58 363.00 L862.44 362.99 L863.31 362.99 L864.17 362.98 L865.04 362.97 L865.90 362.95 L866.76 362.93 L867.63 362.91 L868.49 362.88 L869.36 362.83 L870.22 362.78 L871.08 362.71 L871.95 362.61 L872.81 362.50 L873.68 362.35 L874.54 362.17" stroke="#5b9dc8" stroke-width="1.7" fill="none" stroke-linejoin="round" /><path d="M943.66 362.17 L944.52 362.35 L945.39 362.50 L946.25 362.61 L947.12 362.71 L947.98 362.78 L948.84 362.83 L949.71 362.88 L950.57 362.91 L951.44 362.93 L952.30 362.95 L953.16 362.97 L954.03 362.98 L954.89 362.99 L955.76 362.99 L956.62 363.00 L957.48 363.00 L958.35 363.00 L959.21 363.00 L960.08 363.00 L960.94 363.01 L961.80 363.01 L962.67 363.01 L963.53 363.01 L964.40 363.01 L965.26 363.01 L966.12 363.01 L966.99 363.01 L967.85 363.01 L968.72 363.01 L969.58 363.01 L970.44 363.01 L971.31 363.01 L972.17 363.01 L973.04 363.01 L973.90 363.01 L974.76 363.01 L975.63 363.01 L976.49 363.01 L977.36 363.01 L978.22 363.01 L979.08 363.01 L979.95 363.01 L980.81 363.01 L981.68 363.01 L982.54 363.01 L983.40 363.01 L984.27 363.01 L985.13 363.01 L986.00 363.01 L986.86 363.01 L987.72 363.01 L988.59 363.01 L989.45 363.01 L990.32 363.01 L991.18 363.01 L992.04 363.01 L992.91 363.01 L993.77 363.01 L994.64 363.01 L995.50 363.01 L996.36 363.01 L997.23 363.01 L998.09 363.01 L998.96 363.01 L999.82 363.01 L1000.68 363.01 L1001.55 363.01 L1002.41 363.01 L1003.28 363.01 L1004.14 363.01" stroke="#5b9dc8" stroke-width="1.7" fill="none" stroke-linejoin="round" /><path d="M871.08 362.71 L871.95 362.61 L872.81 362.50 L873.68 362.35 L874.54 362.17 L875.40 361.94 L876.27 361.65 L877.13 361.31 L878.00 360.88 L878.86 360.37 L879.72 359.75 L880.59 359.01 L881.45 358.13 L882.32 357.10 L883.18 355.89 L884.04 354.49 L884.91 352.87 L885.77 351.02 L886.64 348.91 L887.50 346.54 L888.36 343.88 L889.23 340.93 L890.09 337.68 L890.96 334.13 L891.82 330.28 L892.68 326.14 L893.55 321.74 L894.41 317.08 L895.28 312.22 L896.14 307.18 L897.00 302.01 L897.87 296.77 L898.73 291.52 L899.60 286.32 L900.46 281.25 L901.32 276.37 L902.19 271.76 L903.05 267.48 L903.92 263.61 L904.78 260.22 L905.64 257.36 L906.51 255.08 L907.37 253.42 L908.24 252.41 L909.10 252.07 L909.96 252.41 L910.83 253.42 L911.69 255.08 L912.56 257.36 L913.42 260.22 L914.28 263.61 L915.15 267.48 L916.01 271.76 L916.88 276.37 L917.74 281.25 L918.60 286.32 L919.47 291.52 L920.33 296.77 L921.20 302.01 L922.06 307.18 L922.92 312.22 L923.79 317.08 L924.65 321.74 L925.52 326.14 L926.38 330.28 L927.24 334.13 L928.11 337.68 L928.97 340.93 L929.84 343.88 L930.70 346.54 L931.56 348.91 L932.43 351.02 L933.29 352.87 L934.16 354.49 L935.02 355.89 L935.88 357.10 L936.75 358.13 L937.61 359.01 L938.48 359.75 L939.34 360.37 L940.20 360.88 L941.07 361.31 L941.93 361.65 L942.80 361.94 L943.66 362.17 L944.52 362.35 L945.39 362.50 L946.25 362.61 L947.12 362.71" stroke="#3a6890" stroke-width="1.0" fill="none" stroke-linejoin="round" /><path d="M972.0999999999999 251.60H980.0999999999999" stroke="#d9a0b0" stroke-width="1.3" opacity="0.6"/><path d="M942.8999999999999 251.60H950.8999999999999" stroke="#5b9dc8" stroke-width="1.3" opacity="0.6"/></svg>
<div class="t" style="left:796.26px;top:366.01px;font-size:6.0px;color:#5a5a5a;font-weight:normal;">0</div>
<div class="t" style="left:789.59px;top:353.20px;font-size:6.0px;color:#5a5a5a;font-weight:normal;">500</div>
<div class="t" style="left:784.59px;top:340.39px;font-size:6.0px;color:#5a5a5a;font-weight:normal;">1,000</div>
<div class="t" style="left:784.59px;top:327.58px;font-size:6.0px;color:#5a5a5a;font-weight:normal;">1,500</div>
<div class="t" style="left:784.59px;top:314.77px;font-size:6.0px;color:#5a5a5a;font-weight:normal;">2,000</div>
<div class="t" style="left:784.59px;top:301.96px;font-size:6.0px;color:#5a5a5a;font-weight:normal;">2,500</div>
<div class="t" style="left:784.59px;top:289.15px;font-size:6.0px;color:#5a5a5a;font-weight:normal;">3,000</div>
<div class="t" style="left:784.59px;top:276.34px;font-size:6.0px;color:#5a5a5a;font-weight:normal;">3,500</div>
<div class="t" style="left:784.59px;top:263.53px;font-size:6.0px;color:#5a5a5a;font-weight:normal;">4,000</div>
<div class="t" style="left:784.59px;top:250.72px;font-size:6.0px;color:#5a5a5a;font-weight:normal;">4,500</div>
<div class="t" style="left:814.19px;top:373.10px;font-size:6.0px;color:#5a5a5a;font-weight:normal;">-1,000</div>
<div class="t" style="left:859.90px;top:373.10px;font-size:6.0px;color:#5a5a5a;font-weight:normal;">-500</div>
<div class="t" style="left:907.43px;top:373.10px;font-size:6.0px;color:#5a5a5a;font-weight:normal;">0</div>
<div class="t" style="left:947.29px;top:373.10px;font-size:6.0px;color:#5a5a5a;font-weight:normal;">500</div>
<div class="t" style="left:987.99px;top:373.10px;font-size:6.0px;color:#5a5a5a;font-weight:normal;">1,000</div>
<div class="t" style="left:891.96px;top:382.82px;font-size:6.6px;color:#5a5a5a;font-weight:normal;">Radius (µm)</div>
<div class="t" style="left:747.20px;top:304.70px;font-size:6.6px;color:#5a5a5a;transform:rotate(-90deg) scaleX(1.026);transform-origin:31.00px 3.30px">Y intensity (arb. unit)</div>
<div class="t" style="left:423.00px;top:418.72px;font-size:6.6px;color:#3a3a3a;font-weight:normal;transform:scaleX(0.8795);transform-origin:0 0;">Sensor temperature</div>
<div class="t" style="left:388.00px;top:418.72px;font-size:6.6px;color:#3a3a3a;font-weight:normal;transform:scaleX(0.8951);transform-origin:0 0;">Intensity</div>
<svg class="a" style="left:2px;top:410px" width="508" height="137" viewBox="2 410 508 137"><path d="M33.7 420.60H477.7" stroke="#e2e2e2" stroke-width="0.8" stroke-dasharray="1.5 1"/><path d="M33.7 435.19H477.7" stroke="#e2e2e2" stroke-width="0.8" stroke-dasharray="1.5 1"/><path d="M33.7 449.78H477.7" stroke="#e2e2e2" stroke-width="0.8" stroke-dasharray="1.5 1"/><path d="M33.7 464.37H477.7" stroke="#e2e2e2" stroke-width="0.8" stroke-dasharray="1.5 1"/><path d="M33.7 478.96H477.7" stroke="#e2e2e2" stroke-width="0.8" stroke-dasharray="1.5 1"/><path d="M33.7 493.55H477.7" stroke="#e2e2e2" stroke-width="0.8" stroke-dasharray="1.5 1"/><path d="M33.7 508.14H477.7" stroke="#e2e2e2" stroke-width="0.8" stroke-dasharray="1.5 1"/><path d="M33.7 522.73H477.7" stroke="#e2e2e2" stroke-width="0.8" stroke-dasharray="1.5 1"/><path d="M33.7 537.32H477.7" stroke="#e2e2e2" stroke-width="0.8" stroke-dasharray="1.5 1"/><rect x="33.7" y="415.9" width="444.0" height="200" fill="none" stroke="#b4b4b4" stroke-width="0.9"/><path d="M31.700000000000003 415.9V602" stroke="#c4c4c4" stroke-width="0.8"/><path d="M29.700000000000003 420.60H31.700000000000003" stroke="#c4c4c4" stroke-width="0.8"/><path d="M29.700000000000003 435.19H31.700000000000003" stroke="#c4c4c4" stroke-width="0.8"/><path d="M29.700000000000003 449.78H31.700000000000003" stroke="#c4c4c4" stroke-width="0.8"/><path d="M29.700000000000003 464.37H31.700000000000003" stroke="#c4c4c4" stroke-width="0.8"/><path d="M29.700000000000003 478.96H31.700000000000003" stroke="#c4c4c4" stroke-width="0.8"/><path d="M29.700000000000003 493.55H31.700000000000003" stroke="#c4c4c4" stroke-width="0.8"/><path d="M29.700000000000003 508.14H31.700000000000003" stroke="#c4c4c4" stroke-width="0.8"/><path d="M29.700000000000003 522.73H31.700000000000003" stroke="#c4c4c4" stroke-width="0.8"/><path d="M29.700000000000003 537.32H31.700000000000003" stroke="#c4c4c4" stroke-width="0.8"/><path d="M479.7 415.9V602" stroke="#c4c4c4" stroke-width="0.8"/><path d="M479.7 428.20H481.7" stroke="#c4c4c4" stroke-width="0.8"/><path d="M479.7 441.28H481.7" stroke="#c4c4c4" stroke-width="0.8"/><path d="M479.7 454.36H481.7" stroke="#c4c4c4" stroke-width="0.8"/><path d="M479.7 467.44H481.7" stroke="#c4c4c4" stroke-width="0.8"/><path d="M479.7 480.52H481.7" stroke="#c4c4c4" stroke-width="0.8"/><path d="M479.7 493.60H481.7" stroke="#c4c4c4" stroke-width="0.8"/><path d="M479.7 506.68H481.7" stroke="#c4c4c4" stroke-width="0.8"/><path d="M479.7 519.76H481.7" stroke="#c4c4c4" stroke-width="0.8"/><path d="M479.7 532.84H481.7" stroke="#c4c4c4" stroke-width="0.8"/><path d="M479.7 545.92H481.7" stroke="#c4c4c4" stroke-width="0.8"/><path d="M49.3 480.8H456.1" stroke="#e9a0a0" stroke-width="1.6"/><path d="M49.30 495.80 L64.30 468.60 L79.10 439.20 L93.90 490.60 L109.00 473.00 L124.50 513.50 L139.60 473.00 L154.60 486.70 L170.00 440.00 L184.70 436.10 L199.80 473.80 L214.80 489.30 L229.60 426.30 L245.20 517.10 L260.00 507.70 L275.00 502.80 L290.20 469.80 L305.10 496.80 L320.30 509.20 L335.60 518.60 L350.50 524.40 L365.70 517.80 L380.60 492.50 L395.90 498.50 L410.80 483.30 L425.70 535.00 L440.90 497.10 L456.10 523.50" stroke="#5b9dc8" stroke-width="0.9" fill="none" stroke-linejoin="round" /><path d="M413.0 421.90H421.0" stroke="#e9a0a0" stroke-width="1.3" opacity="0.6"/><path d="M378.0 421.90H386.0" stroke="#5b9dc8" stroke-width="1.3" opacity="0.6"/></svg>
<div class="t" style="left:18.99px;top:417.71px;font-size:6.0px;color:#5a5a5a;font-weight:normal;">860</div>
<div class="t" style="left:18.99px;top:432.30px;font-size:6.0px;color:#5a5a5a;font-weight:normal;">855</div>
<div class="t" style="left:18.99px;top:446.89px;font-size:6.0px;color:#5a5a5a;font-weight:normal;">850</div>
<div class="t" style="left:18.99px;top:461.48px;font-size:6.0px;color:#5a5a5a;font-weight:normal;">845</div>
<div class="t" style="left:18.99px;top:476.07px;font-size:6.0px;color:#5a5a5a;font-weight:normal;">840</div>
<div class="t" style="left:18.99px;top:490.66px;font-size:6.0px;color:#5a5a5a;font-weight:normal;">835</div>
<div class="t" style="left:18.99px;top:505.25px;font-size:6.0px;color:#5a5a5a;font-weight:normal;">830</div>
<div class="t" style="left:18.99px;top:519.84px;font-size:6.0px;color:#5a5a5a;font-weight:normal;">825</div>
<div class="t" style="left:18.99px;top:534.43px;font-size:6.0px;color:#5a5a5a;font-weight:normal;">820</div>
<div class="t" style="left:482.00px;top:425.71px;font-size:6.0px;color:#5a5a5a;font-weight:normal;">30.3</div>
<div class="t" style="left:482.00px;top:438.79px;font-size:6.0px;color:#5a5a5a;font-weight:normal;">30.2</div>
<div class="t" style="left:482.00px;top:451.87px;font-size:6.0px;color:#5a5a5a;font-weight:normal;">30.1</div>
<div class="t" style="left:482.00px;top:464.95px;font-size:6.0px;color:#5a5a5a;font-weight:normal;">30.0</div>
<div class="t" style="left:482.00px;top:478.03px;font-size:6.0px;color:#5a5a5a;font-weight:normal;">29.9</div>
<div class="t" style="left:482.00px;top:491.11px;font-size:6.0px;color:#5a5a5a;font-weight:normal;">29.8</div>
<div class="t" style="left:482.00px;top:504.19px;font-size:6.0px;color:#5a5a5a;font-weight:normal;">29.7</div>
<div class="t" style="left:482.00px;top:517.27px;font-size:6.0px;color:#5a5a5a;font-weight:normal;">29.6</div>
<div class="t" style="left:482.00px;top:530.35px;font-size:6.0px;color:#5a5a5a;font-weight:normal;">29.5</div>
<div class="t" style="left:482.00px;top:543.43px;font-size:6.0px;color:#5a5a5a;font-weight:normal;">29.4</div>
<div class="t" style="left:1.35px;top:476.80px;font-size:6.4px;color:#5a5a5a;transform:rotate(-90deg) scaleX(0.944);transform-origin:11.25px 3.20px">Intensity</div>
<div class="t" style="left:463.80px;top:477.10px;font-size:6.6px;color:#5a5a5a;transform:rotate(90deg) scaleX(1.001);transform-origin:36.00px 3.30px">Sensor temperature (°C)</div>
<div class="t" style="left:966.00px;top:419.02px;font-size:6.6px;color:#3a3a3a;font-weight:normal;transform:scaleX(0.9122);transform-origin:0 0;">Intensity Y</div>
<div class="t" style="left:925.00px;top:419.02px;font-size:6.6px;color:#3a3a3a;font-weight:normal;transform:scaleX(0.9087);transform-origin:0 0;">Intensity X</div>
<svg class="a" style="left:516px;top:410px" width="506" height="137" viewBox="516 410 506 137"><path d="M543.9 426.70H995" stroke="#e2e2e2" stroke-width="0.8" stroke-dasharray="1.5 1"/><path d="M543.9 438.88H995" stroke="#e2e2e2" stroke-width="0.8" stroke-dasharray="1.5 1"/><path d="M543.9 451.06H995" stroke="#e2e2e2" stroke-width="0.8" stroke-dasharray="1.5 1"/><path d="M543.9 463.24H995" stroke="#e2e2e2" stroke-width="0.8" stroke-dasharray="1.5 1"/><path d="M543.9 475.42H995" stroke="#e2e2e2" stroke-width="0.8" stroke-dasharray="1.5 1"/><path d="M543.9 487.60H995" stroke="#e2e2e2" stroke-width="0.8" stroke-dasharray="1.5 1"/><path d="M543.9 499.78H995" stroke="#e2e2e2" stroke-width="0.8" stroke-dasharray="1.5 1"/><path d="M543.9 511.96H995" stroke="#e2e2e2" stroke-width="0.8" stroke-dasharray="1.5 1"/><path d="M543.9 524.14H995" stroke="#e2e2e2" stroke-width="0.8" stroke-dasharray="1.5 1"/><path d="M543.9 536.32H995" stroke="#e2e2e2" stroke-width="0.8" stroke-dasharray="1.5 1"/><rect x="543.9" y="416.4" width="451.1" height="200" fill="none" stroke="#b4b4b4" stroke-width="0.9"/><path d="M541.9 416.4V602" stroke="#c4c4c4" stroke-width="0.8"/><path d="M539.9 426.70H541.9" stroke="#c4c4c4" stroke-width="0.8"/><path d="M539.9 438.88H541.9" stroke="#c4c4c4" stroke-width="0.8"/><path d="M539.9 451.06H541.9" stroke="#c4c4c4" stroke-width="0.8"/><path d="M539.9 463.24H541.9" stroke="#c4c4c4" stroke-width="0.8"/><path d="M539.9 475.42H541.9" stroke="#c4c4c4" stroke-width="0.8"/><path d="M539.9 487.60H541.9" stroke="#c4c4c4" stroke-width="0.8"/><path d="M539.9 499.78H541.9" stroke="#c4c4c4" stroke-width="0.8"/><path d="M539.9 511.96H541.9" stroke="#c4c4c4" stroke-width="0.8"/><path d="M539.9 524.14H541.9" stroke="#c4c4c4" stroke-width="0.8"/><path d="M539.9 536.32H541.9" stroke="#c4c4c4" stroke-width="0.8"/><path d="M997 416.4V602" stroke="#c4c4c4" stroke-width="0.8"/><path d="M997 423.90H999" stroke="#c4c4c4" stroke-width="0.8"/><path d="M997 436.55H999" stroke="#c4c4c4" stroke-width="0.8"/><path d="M997 449.20H999" stroke="#c4c4c4" stroke-width="0.8"/><path d="M997 461.85H999" stroke="#c4c4c4" stroke-width="0.8"/><path d="M997 474.50H999" stroke="#c4c4c4" stroke-width="0.8"/><path d="M997 487.15H999" stroke="#c4c4c4" stroke-width="0.8"/><path d="M997 499.80H999" stroke="#c4c4c4" stroke-width="0.8"/><path d="M997 512.45H999" stroke="#c4c4c4" stroke-width="0.8"/><path d="M997 525.10H999" stroke="#c4c4c4" stroke-width="0.8"/><path d="M997 537.75H999" stroke="#c4c4c4" stroke-width="0.8"/><path d="M559.40 490.40 L574.60 497.60 L589.80 518.60 L604.70 525.40 L619.90 473.20 L634.80 430.70 L650.60 427.90 L666.40 430.70 L681.60 463.20 L697.10 534.90 L712.60 531.20 L728.10 490.40 L743.30 478.40 L759.10 454.60 L774.00 433.00 L789.80 500.50 L805.60 498.50 L820.80 501.30 L835.70 458.30 L851.50 487.60 L866.70 441.60 L881.60 440.20 L897.40 426.70 L912.60 441.10 L928.10 463.20 L943.30 499.00 L959.10 440.20 L974.30 496.20" stroke="#eed978" stroke-width="0.9" fill="none" stroke-linejoin="round" /><path d="M559.40 534.90 L574.60 516.30 L589.80 520.60 L604.70 504.20 L619.90 529.70 L634.80 510.50 L650.60 480.40 L666.40 522.60 L681.60 530.60 L697.10 519.10 L712.60 437.30 L728.10 515.40 L743.30 426.70 L759.10 450.30 L774.00 529.20 L789.80 433.60 L805.60 514.00 L820.80 493.30 L835.70 443.10 L851.50 455.40 L866.70 462.30 L881.60 443.10 L897.40 534.90 L912.60 516.30 L928.10 433.60 L943.30 463.20 L959.10 459.40 L974.30 531.20" stroke="#5b9dc8" stroke-width="0.9" fill="none" stroke-linejoin="round" /><path d="M956 422.20H964" stroke="#eed978" stroke-width="1.3" opacity="0.6"/><path d="M915 422.20H923" stroke="#5b9dc8" stroke-width="1.3" opacity="0.6"/></svg>
<div class="t" style="left:532.03px;top:423.81px;font-size:6.0px;color:#5a5a5a;font-weight:normal;">69</div>
<div class="t" style="left:532.03px;top:435.99px;font-size:6.0px;color:#5a5a5a;font-weight:normal;">68</div>
<div class="t" style="left:532.03px;top:448.17px;font-size:6.0px;color:#5a5a5a;font-weight:normal;">67</div>
<div class="t" style="left:532.03px;top:460.35px;font-size:6.0px;color:#5a5a5a;font-weight:normal;">66</div>
<div class="t" style="left:532.03px;top:472.53px;font-size:6.0px;color:#5a5a5a;font-weight:normal;">65</div>
<div class="t" style="left:532.03px;top:484.71px;font-size:6.0px;color:#5a5a5a;font-weight:normal;">64</div>
<div class="t" style="left:532.03px;top:496.89px;font-size:6.0px;color:#5a5a5a;font-weight:normal;">63</div>
<div class="t" style="left:532.03px;top:509.07px;font-size:6.0px;color:#5a5a5a;font-weight:normal;">62</div>
<div class="t" style="left:532.03px;top:521.25px;font-size:6.0px;color:#5a5a5a;font-weight:normal;">61</div>
<div class="t" style="left:532.03px;top:533.43px;font-size:6.0px;color:#5a5a5a;font-weight:normal;">60</div>
<div class="t" style="left:999.50px;top:421.01px;font-size:6.0px;color:#5a5a5a;font-weight:normal;">1</div>
<div class="t" style="left:999.50px;top:433.66px;font-size:6.0px;color:#5a5a5a;font-weight:normal;">0</div>
<div class="t" style="left:999.50px;top:446.31px;font-size:6.0px;color:#5a5a5a;font-weight:normal;">-1</div>
<div class="t" style="left:999.50px;top:458.96px;font-size:6.0px;color:#5a5a5a;font-weight:normal;">-2</div>
<div class="t" style="left:999.50px;top:471.61px;font-size:6.0px;color:#5a5a5a;font-weight:normal;">-3</div>
<div class="t" style="left:999.50px;top:484.26px;font-size:6.0px;color:#5a5a5a;font-weight:normal;">-4</div>
<div class="t" style="left:999.50px;top:496.91px;font-size:6.0px;color:#5a5a5a;font-weight:normal;">-5</div>
<div class="t" style="left:999.50px;top:509.56px;font-size:6.0px;color:#5a5a5a;font-weight:normal;">-6</div>
<div class="t" style="left:999.50px;top:522.21px;font-size:6.0px;color:#5a5a5a;font-weight:normal;">-7</div>
<div class="t" style="left:999.50px;top:534.86px;font-size:6.0px;color:#5a5a5a;font-weight:normal;">-8</div>
<div class="t" style="left:517.30px;top:478.00px;font-size:6.4px;color:#5a5a5a;transform:rotate(-90deg) scaleX(0.880);transform-origin:8.50px 3.20px">X (µm)</div>
<div class="t" style="left:1003.70px;top:477.80px;font-size:6.4px;color:#5a5a5a;transform:rotate(90deg) scaleX(0.885);transform-origin:8.50px 3.20px">Y (µm)</div>
<div class="a" style="left:0px;top:0px;width:1.5px;height:547px;background:#3c4248"></div>
</body></html>
